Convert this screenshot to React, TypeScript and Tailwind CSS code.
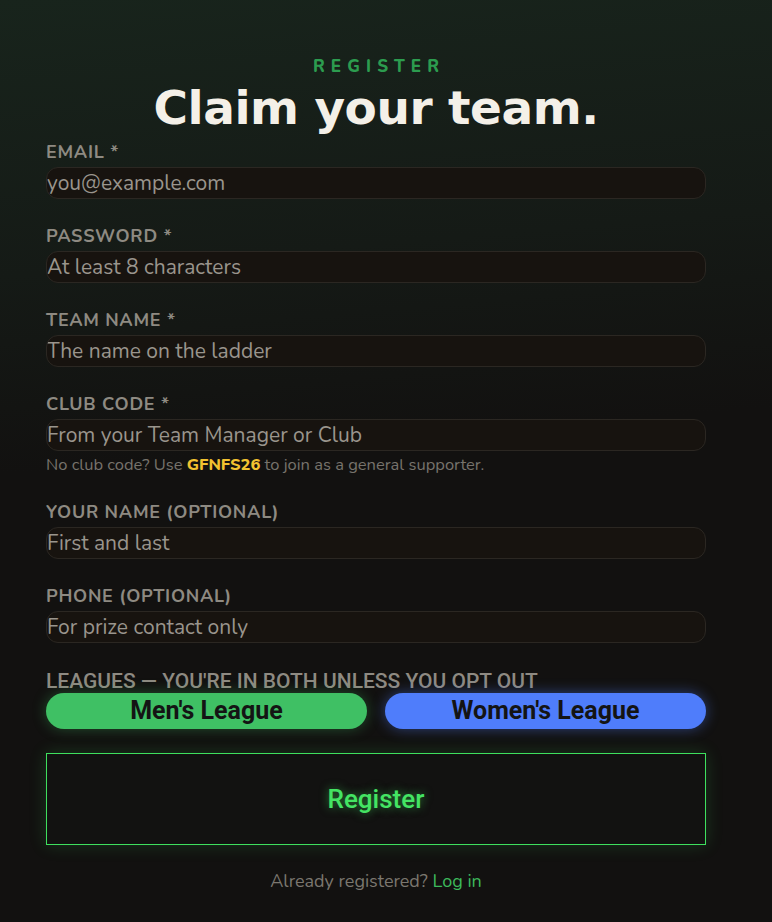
import { useState } from "react";

const body = "font-['Nunito','Open_Sans','Lato',sans-serif]";
const cond = "font-['Roboto','DejaVu_Sans',sans-serif]";

type FieldProps = {
  label: string;
  placeholder: string;
  type?: string;
  hint?: React.ReactNode;
};

function Field({ label, placeholder, type = "text", hint }: FieldProps) {
  return (
    <label className="flex flex-col">
      <span className="text-[18px] leading-[20px] font-bold tracking-[0.04em] text-[#8e8a82] uppercase">
        {label}
      </span>
      <input
        type={type}
        placeholder={placeholder}
        className="mt-[5px] h-[32px] w-full rounded-[12px] border border-[#2b2722] bg-[#17130f] px-0 text-[21px] text-[#d8d3c9] placeholder:text-[#9a958d] outline-none"
      />
      {hint && (
        <span className="mt-[4px] text-[16.5px] leading-[20px] text-[#77736c]">{hint}</span>
      )}
    </label>
  );
}

export default function App() {
  const [men, setMen] = useState(true);
  const [women, setWomen] = useState(true);

  return (
    <div
      className={`min-h-[922px] w-full bg-[linear-gradient(175deg,#18241c_0%,#151a16_28%,#121110_48%,#121110_100%)] ${body}`}
    >
      <div className="ml-[46px] w-[660px] pt-[58px]">
        {/* Header */}
        <div className="flex flex-col items-center">
          <span className="text-[17px] leading-[18px] font-extrabold tracking-[0.36em] text-[#2c9c4f] pl-[0.36em]">
            REGISTER
          </span>
          <h1 className="mt-[2px] mb-[4px] font-['DejaVu_Sans',sans-serif] text-[47px] leading-[60px] font-bold tracking-[-0.01em] text-[#f4f0e8]">
            Claim your team.
          </h1>
        </div>

        {/* Form */}
        <form className="flex flex-col gap-[27px]" onSubmit={(e) => e.preventDefault()}>
          <Field label="Email *" placeholder="you@example.com" type="email" />
          <Field label="Password *" placeholder="At least 8 characters" type="password" />
          <Field label="Team name *" placeholder="The name on the ladder" />
          <Field
            label="Club code *"
            placeholder="From your Team Manager or Club"
            hint={
              <>
                No club code? Use <b className="font-extrabold text-[#f2c230]">GFNFS26</b> to join
                as a general supporter.
              </>
            }
          />
          <Field label="Your name (optional)" placeholder="First and last" />
          <Field label="Phone (optional)" placeholder="For prize contact only" type="tel" />

          <div className="-mt-[1px] flex flex-col">
            <span className={`${cond} text-[21px] leading-[24px] font-medium text-[#8e8a82] uppercase`}>
              Leagues — you're in both unless you opt out
            </span>
            <div className="grid grid-cols-2 gap-[18px]">
              <button
                type="button"
                onClick={() => setMen(!men)}
                className={`${cond} h-[36px] rounded-[18px] text-[25px] leading-[36px] font-bold text-[#141414] ${
                  men ? "bg-[#3fc064] shadow-[0_0_14px_rgba(63,192,100,0.35)]" : "bg-[#2a2a2a]"
                }`}
              >
                Men's League
              </button>
              <button
                type="button"
                onClick={() => setWomen(!women)}
                className={`${cond} h-[36px] rounded-[18px] text-[25px] leading-[36px] font-bold text-[#141414] ${
                  women ? "bg-[#4f7dfb] shadow-[0_0_14px_rgba(79,125,251,0.45)]" : "bg-[#2a2a2a]"
                }`}
              >
                Women's League
              </button>
            </div>
          </div>

          <button
            type="submit"
            className={`-mt-[3px] h-[92px] w-full border border-[#3ee05e] bg-[#121211] ${cond} text-[26px] font-medium text-[#44e463] shadow-[0_0_16px_rgba(62,224,94,0.18)] [text-shadow:0_0_10px_rgba(68,228,99,0.55)]`}
          >
            Register
          </button>
        </form>

        <p className="mt-[24px] text-center text-[18px] leading-[24px] text-[#7b776f]">
          Already registered? <a className="text-[#3dba5c]" href="#">Log in</a>
        </p>
      </div>
    </div>
  );
}
